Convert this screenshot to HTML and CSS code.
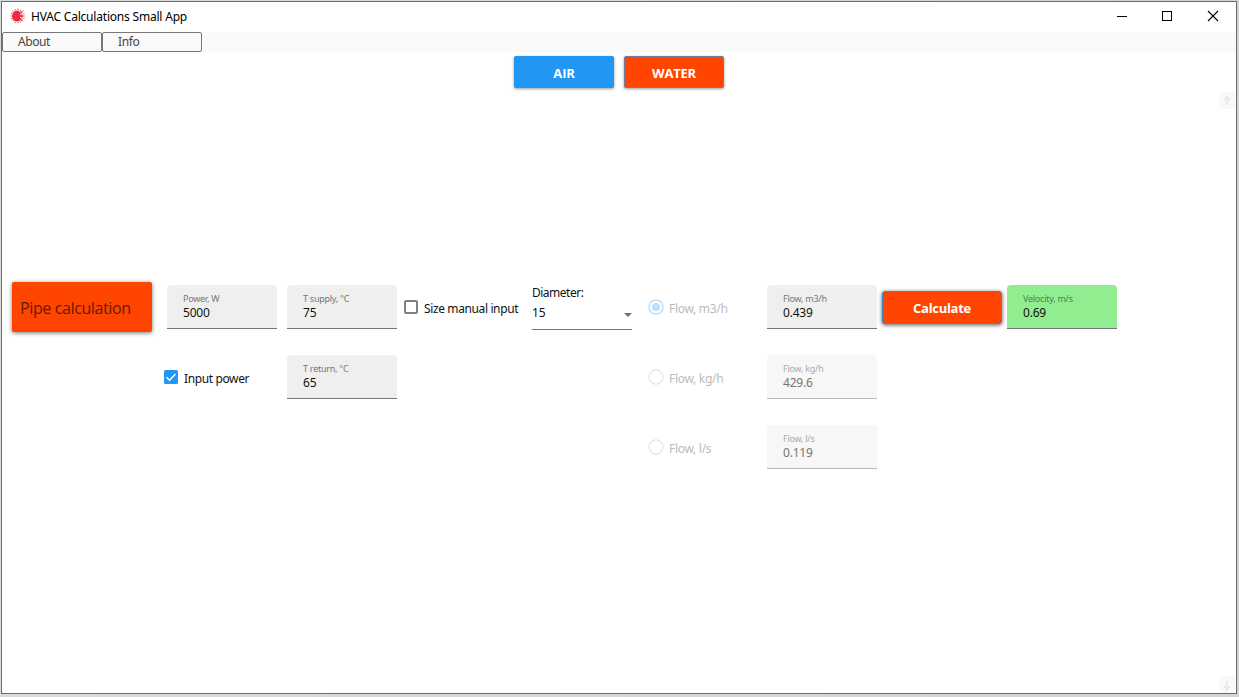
FILE: index.html
```html
<!DOCTYPE html>
<html lang="en">
<head>
<meta charset="utf-8">
<title>HVAC Calculations Small App</title>
<link rel="stylesheet" href="styles.css">
</head>
<body>
<div class="window">
  <header class="titlebar">
    <svg class="logo" width="16" height="16" viewBox="0 0 16 16"><g stroke="#f4707d" stroke-width="1.2" fill="none" stroke-dasharray="1.500 .7"><path d="M8 .5v15M.5 8h15M2.500 2.500l11 11M13.500 2.500l-11 11M5 1l6 14M1 5l14 6M1 11l14-6M5 15l6-14"/></g><path d="M8 2.500L10 4l-.5 2L11 8l-1.500 2 .5 2.500-2 1-3-.5-2.500-2L2 8l.8-3L5 3z" fill="#ef2942"/><path d="M9 8h4.500M9 6l3-2.500M9 10l3 2.500" stroke="#ef2942" stroke-width="1.300"/></svg>
    <span class="title">HVAC Calculations Small App</span>
    <div class="controls">
      <svg width="46" height="30"><path d="M16 14.500h10" stroke="#000"/></svg>
      <svg width="46" height="30"><rect x="15.500" y="9.500" width="9" height="9" fill="none" stroke="#000"/></svg>
      <svg width="46" height="30"><path d="M15 9l10 10M25 9l-10 10" stroke="#000" stroke-width="1.100"/></svg>
    </div>
  </header>
  <nav class="menu"><span class="menu-item about">About</span><span class="menu-item info">Info</span></nav>
  <div class="modes"><button class="mode air"><span>AIR</span></button><button class="mode water"><span>WATER</span></button></div>
  <main class="body">
    <div class="calc-grid">
      <div class="card"><span>Pipe calculation</span></div>
      <div class="field c2"><label>Power, W</label><b>5000</b></div>
      <div class="field c3"><label>T supply, °C</label><b>75</b></div>
      <div class="check c4"><i class="box"></i><span>Size manual input</span></div>
      <div class="select c5"><label>Diameter:</label><div class="combo"><b>15</b><svg width="8" height="4"><path d="M0 0h8L4 4z" fill="#737373"/></svg></div></div>
      <div class="radio c6"><svg width="16" height="16"><circle cx="8" cy="8" r="7" fill="none" stroke="#bcdffb" stroke-width="1.500"/><circle cx="8" cy="8" r="4" fill="#bcdffb"/></svg><span>Flow, m3/h</span></div>
      <div class="field c7"><label>Flow, m3/h</label><b>0.439</b></div>
      <button class="calculate"><span>Calculate</span></button>
      <div class="field c9 velocity"><label>Velocity, m/s</label><b>0.69</b></div>
      <div class="check c2 r2"><svg width="14" height="14"><rect width="14" height="14" rx="1.500" fill="#2196f3"/><path d="M2.500 7.200l3 3L11.500 4" fill="none" stroke="#fff" stroke-width="1.500"/></svg><span>Input power</span></div>
      <div class="field c3 r2"><label>T return, °C</label><b>65</b></div>
      <div class="radio c6 r2"><svg width="16" height="16"><circle cx="8" cy="8" r="7" fill="none" stroke="#e6e6e6" stroke-width="1.300"/></svg><span>Flow, kg/h</span></div>
      <div class="field c7 r2 disabled"><label>Flow, kg/h</label><b>429.6</b></div>
      <div class="radio c6 r3"><svg width="16" height="16"><circle cx="8" cy="8" r="7" fill="none" stroke="#e6e6e6" stroke-width="1.300"/></svg><span>Flow, l/s</span></div>
      <div class="field c7 r3 disabled"><label>Flow, l/s</label><b>0.119</b></div>
    </div>
    <div class="scrollbar">
      <svg width="16" height="17"><rect width="16" height="17" fill="#f9f9f9"/><path d="M8 13V5M5 8l3-3 3 3" fill="none" stroke="#e3e3e3" stroke-width="1.300"/></svg>
      <svg width="16" height="17"><rect width="16" height="17" fill="#f9f9f9"/><path d="M8 5v8M5 10l3 3 3-3" fill="none" stroke="#e3e3e3" stroke-width="1.300"/></svg>
    </div>
  </main>
</div>
</body>
</html>
```
FILE: styles.css
```css
* { box-sizing: border-box; }
body { margin: 0; height: 697px; padding: 1px 2px 3px 1px; background: linear-gradient(90deg, #d9dcda, #d2d4d3); overflow: hidden; font: 12px/16px "Noto Sans", "Open Sans", sans-serif; color: #111; }
span, label, b { white-space: nowrap; }
button { padding: 0; border: 0; color: #fff; font: 700 13px/18px "Open Sans", sans-serif; }
.window { height: 693px; border: 1px solid #6b6b6b; background: #fff; display: flex; flex-direction: column; }
.titlebar { height: 30px; display: flex; align-items: flex-start; padding-left: 8px; }
.logo { margin-top: 6px; }
.title { margin: 7px 0 0 5px; color: #000; letter-spacing: -.2px; }
.controls { display: flex; margin: 0 -3px 0 auto; }
.menu { height: 20px; background: #fafafa; display: flex; }
.menu-item { width: 100px; height: 20px; border: 1px solid #777; border-radius: 2px; padding: 1px 0 0 15px; color: #444; letter-spacing: -.4px; }
.modes { height: 40px; display: flex; justify-content: center; gap: 10px; padding: 4px 0 0 0; }
.mode { width: 100px; height: 32px; border-radius: 2px; background: #2196f3; box-shadow: 0 1px 3px #0006; display: flex; align-items: center; justify-content: center; padding-top: 1px; letter-spacing: -.2px; }
.water { background: #ff4500; border: 1px solid #717b9c; }
.body { flex: 1; display: flex; justify-content: space-between; }
.calc-grid { margin-top: 180px; height: 210px; display: grid; grid-template-columns: 160px repeat(8, 120px); grid-template-rows: repeat(3, 70px); }
.card { width: 140px; height: 50px; margin: 10px; border-radius: 2px; background: #ff4500; box-shadow: 0 1px 4px #0008; font: 16px/22px "Open Sans", sans-serif; letter-spacing: -.38px; color: #661c00; padding: 15px 0 0 8px; }
.field { width: 110px; height: 44px; margin: 13px 5px; background: #efefef; border-bottom: 1px solid #777; border-radius: 4px 4px 0 0; padding: 8px 0 0 16px; display: flex; flex-direction: column; align-items: flex-start; }
.field label { font-size: 9px; line-height: 12px; color: #777; letter-spacing: -.25px; }
.field b, .combo b { font-weight: 400; font-size: 12px; line-height: 16px; color: #111; letter-spacing: -.2px; }
.field.disabled { background: #f7f7f7; border-color: #b8b8b8; }
.field.disabled label { color: #aaa; }
.field.disabled b { color: #757575; }
.field.velocity { background: #90ee90; }
.field.velocity label { color: #517e51; }
.c2 { grid-column: 2; } .c3 { grid-column: 3; } .c4 { grid-column: 4; } .c5 { grid-column: 5; } .c6 { grid-column: 6; } .c7 { grid-column: 7; } .c9 { grid-column: 9; }
.r2 { grid-row: 2; } .r3 { grid-row: 3; }
.check { display: flex; align-items: flex-start; padding: 28px 0 0 2px; gap: 6px; }
.check span { margin-top: 1px; letter-spacing: -.38px; }
.box { flex: none; width: 14px; height: 14px; border: 2px solid #808080; border-radius: 2px; }
.select { padding: 13px 10px 13px; }
.select label { display: block; letter-spacing: -.5px; }
.combo { width: 100px; height: 29px; border-bottom: 1px solid #777; display: flex; justify-content: space-between; padding-top: 4px; }
.combo svg { margin-top: 8px; }
.radio { display: flex; align-items: flex-start; padding: 27px 0 0 6px; gap: 5px; color: #bbb; }
.radio span { margin-top: 2px; letter-spacing: -.3px; }
.calculate { grid-column: 8; width: 120px; height: 33px; margin-top: 19px; background: #ff4500; border: 1px solid #3c87cc; border-radius: 3px; box-shadow: 0 1px 4px #000a; display: flex; justify-content: center; align-items: center; letter-spacing: -.3px; }
.scrollbar { width: 17px; display: flex; flex-direction: column; justify-content: space-between; }
```
